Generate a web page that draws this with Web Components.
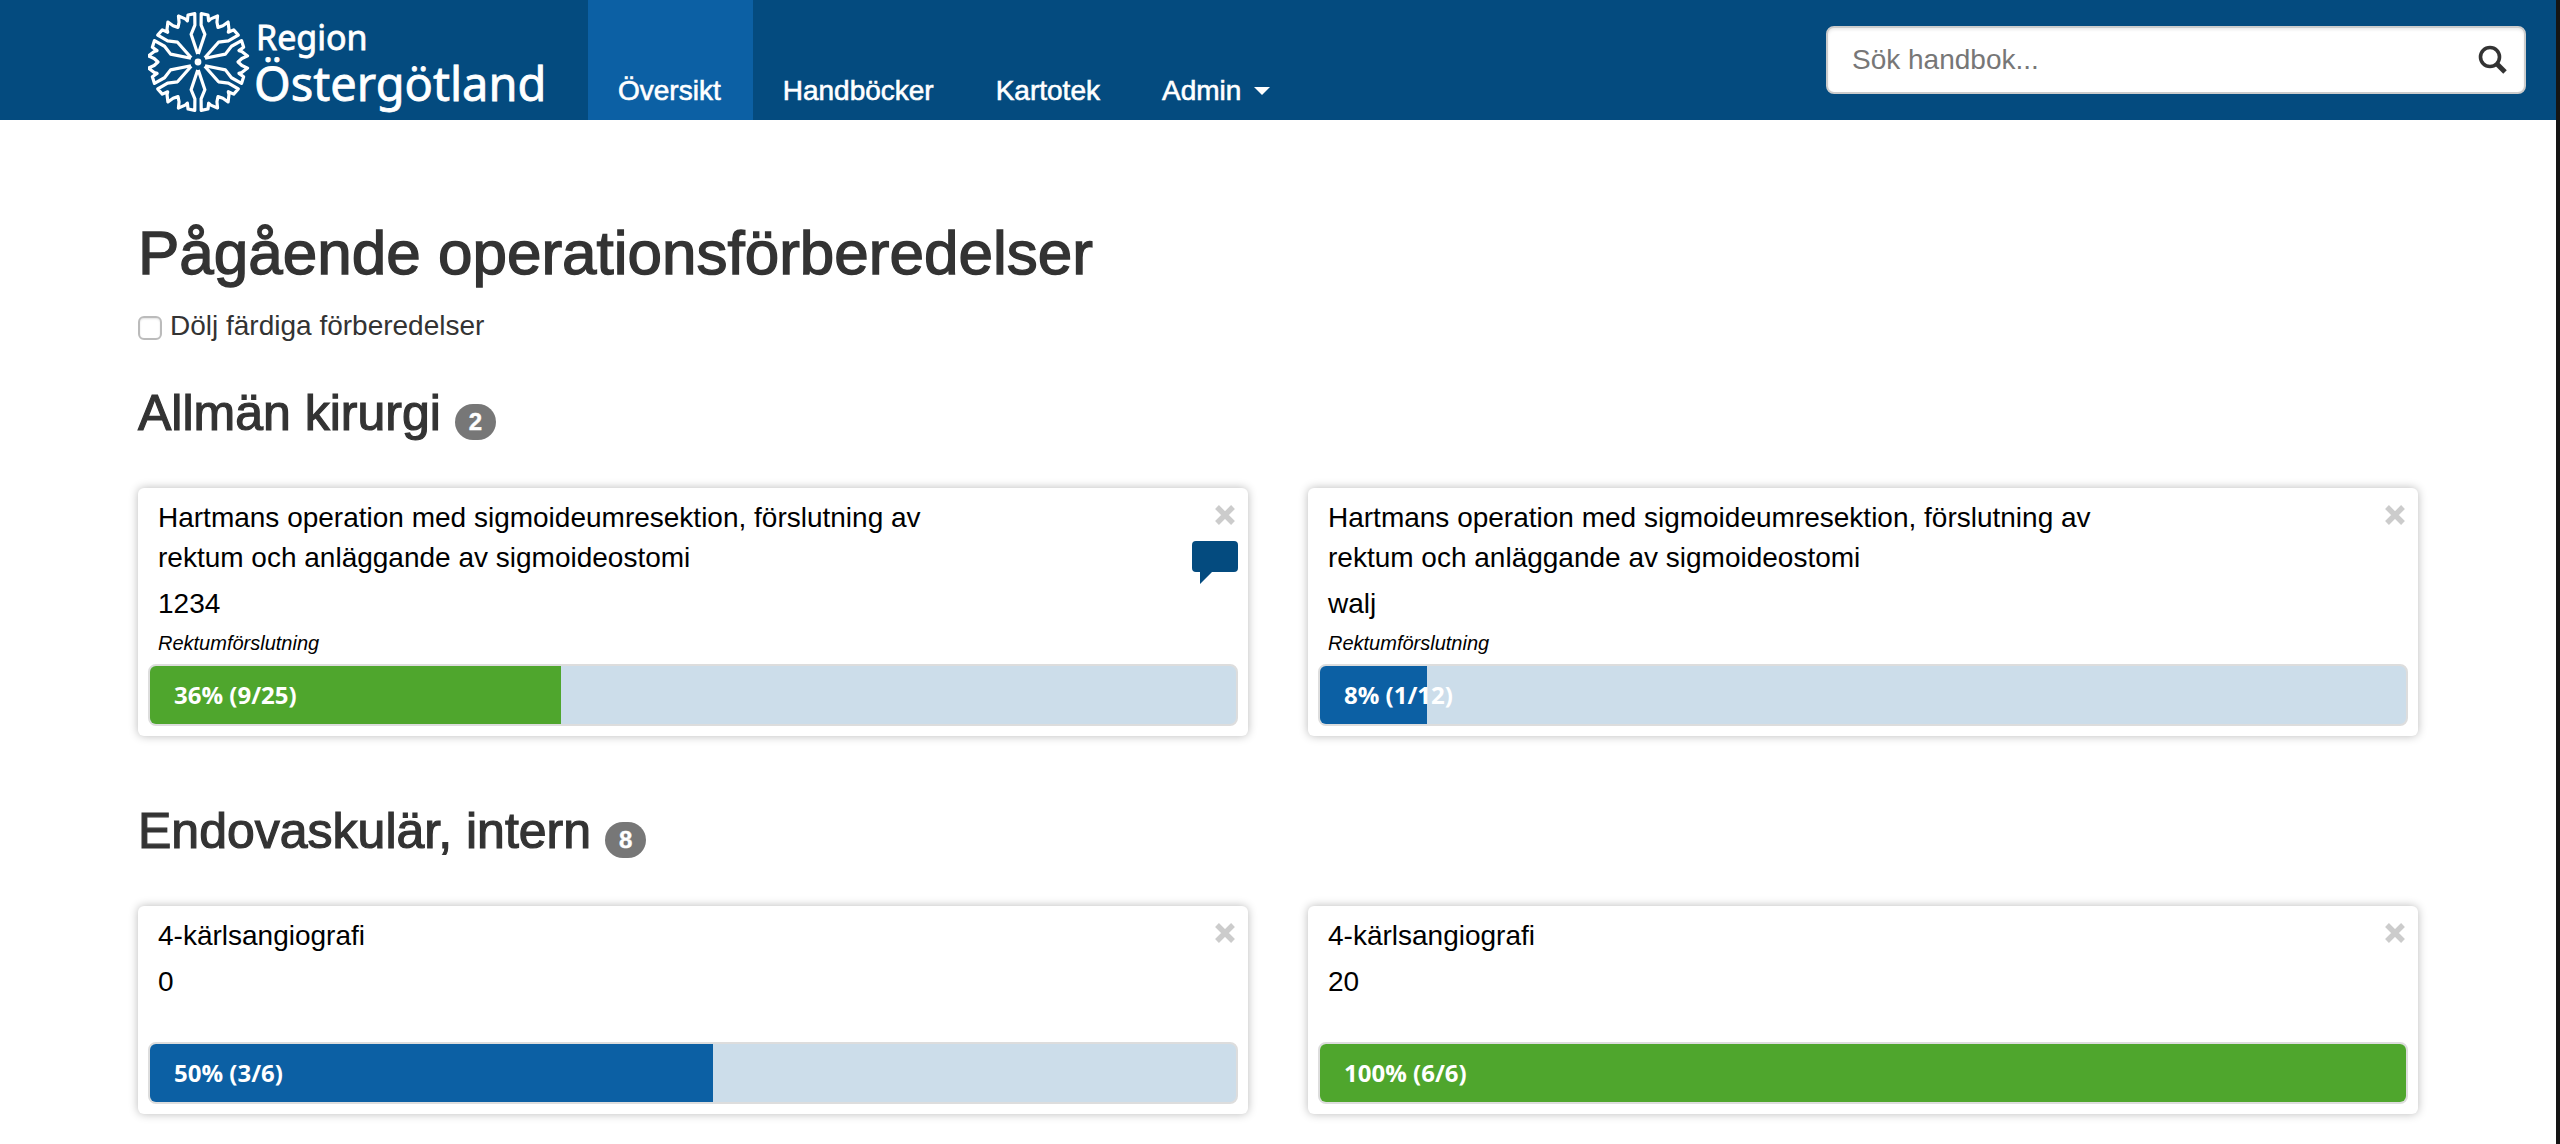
<!DOCTYPE html>
<html lang="sv">
<head>
<meta charset="utf-8">
<meta name="viewport" content="width=device-width, initial-scale=1">
<title>Pågående operationsförberedelser</title>
<style>
  html { background: #fff; }
  body {
    margin: 0;
    font: 28px/40px "Liberation Sans", Arial, sans-serif;
    color: #333;
    --navy: #044b7f;
    --blue: #0c60a4;
    --green: #4fa62d;
    --pale: #ccddea;
  }
</style>
</head>
<body>
<op-app>
  <op-header slot="header">
    <op-logo slot="brand"></op-logo>
    <op-nav-item active>Översikt</op-nav-item>
    <op-nav-item>Handböcker</op-nav-item>
    <op-nav-item>Kartotek</op-nav-item>
    <op-nav-item menu>Admin</op-nav-item>
    <op-search slot="search"></op-search>
  </op-header>
  <op-title>Pågående operationsförberedelser</op-title>
  <op-filter>Dölj färdiga förberedelser</op-filter>
  <op-section heading="Allmän kirurgi" count="2">
    <op-card patient="1234" note="Rektumförslutning" percent="36" steps="9/25" tone="green" comment>Hartmans operation med sigmoideumresektion, förslutning av rektum och anläggande av sigmoideostomi</op-card>
    <op-card patient="walj" note="Rektumförslutning" percent="8" steps="1/12" tone="blue">Hartmans operation med sigmoideumresektion, förslutning av rektum och anläggande av sigmoideostomi</op-card>
  </op-section>
  <op-section heading="Endovaskulär, intern" count="8">
    <op-card patient="0" percent="50" steps="3/6" tone="blue">4-kärlsangiografi</op-card>
    <op-card patient="20" percent="100" steps="6/6" tone="green">4-kärlsangiografi</op-card>
  </op-section>
</op-app>

<script>
class Base extends HTMLElement {
  connectedCallback() {
    if (this.shadowRoot) return;
    this.attachShadow({ mode: 'open' }).innerHTML =
      '<style>*{box-sizing:border-box}' + this.css() + '</style>' + this.html();
  }
}

customElements.define('op-app', class extends Base {
  css() { return `
    :host { display: block; min-height: 100vh; box-sizing: border-box; border-right: 4px solid #151515; }
    main { max-width: 2340px; margin: 0 auto; padding: 99px 30px 30px; }
  `; }
  html() { return '<slot name="header"></slot><main><slot></slot></main>'; }
});

customElements.define('op-header', class extends Base {
  css() { return `
    :host { display: block; }
    header { display: flex; align-items: stretch; justify-content: space-between; height: 120px; padding: 0 30px 0 148px; background: var(--navy); }
    .left { display: flex; gap: 40px; }
    nav { display: flex; }
    .find { display: flex; align-items: center; }
  `; }
  html() { return `<header><div class="left"><slot name="brand"></slot><nav aria-label="Huvudmeny"><slot></slot></nav></div><div class="find"><slot name="search"></slot></div></header>`; }
});

customElements.define('op-logo', class extends Base {
  css() { return `
    :host { display: block; width: 400px; }
    a { display: block; }
    svg { display: block; width: 400px; height: 120px; }
    text { fill: #fff; stroke: #fff; stroke-width: 0.8px; font-family: "Noto Sans", "Open Sans", sans-serif; }
  `; }
  html() {
    // Half of one petal's toothed rim: [degrees from the petal's axis, radius]
    const half = [[26.2, 48.5], [18, 48], [15.5, 42.5], [13.5, 45], [7, 50], [4.5, 44], [0, 40]];
    const rim = [...half.map(([a, r]) => [-a, r]), ...half.slice(0, -1).reverse()];
    const at = (deg, r) => {
      const t = deg * Math.PI / 180;
      return (r * Math.sin(t)).toFixed(2) + ' ' + (-r * Math.cos(t)).toFixed(2);
    };
    // Folded sides run from the rim in towards the hub
    const side = [[25.2, 37], [16, 28.5], [28, 8]];
    // The petal is open at the hub, so the outline starts and ends on its sides
    const pts = [...side.slice().reverse().map(([a, r]) => at(-a, r)), ...rim.map(([a, r]) => at(a, r)), ...side.map(([a, r]) => at(a, r))];
    const petal = 'M' + pts.join('L');
    const petals = [30, 90, 150, 210, 270, 330].map(d => `<path d="${petal}" transform="rotate(${d})"/>`).join('');
    return `<a href="#"><svg viewBox="0 0 400 120">
      <g transform="translate(50 62)" fill="none" stroke="#fff" stroke-width="3.2" stroke-linejoin="round">${petals}<circle r="3.4" fill="#fff" stroke="none"/></g>
      <text x="108" y="50" font-size="34">Region</text>
      <text x="106" y="101" font-size="47">Östergötland</text>
    </svg></a>`;
  }
});

customElements.define('op-nav-item', class extends Base {
  css() { return `
    :host { display: block; }
    a { display: flex; align-items: center; gap: 13px; height: 120px; padding: 62px 32px 0 30px; color: #fff; text-decoration: none; -webkit-text-stroke: 0.6px #fff; }
    :host([active]) a { background: var(--blue); }
    i { border: 8px solid transparent; border-top-color: #fff; border-bottom: 0; }
  `; }
  html() { return `<a href="#"><slot></slot>${this.hasAttribute('menu') ? '<i></i>' : ''}</a>`; }
});

customElements.define('op-search', class extends Base {
  css() { return `
    :host { display: block; }
    form { display: flex; align-items: center; width: 700px; height: 68px; margin: 0; padding-right: 16px; background: #fff; border: 2px solid #ccc; border-radius: 8px; box-shadow: inset 0 2px 3px rgba(0,0,0,.08); }
    input { flex: 1; min-width: 0; height: 60px; padding: 0 24px; border: 0; outline: 0; background: none; font: inherit; color: #333; }
    input::placeholder { color: #777; opacity: 1; }
    button { display: block; padding: 0; border: 0; background: none; }
    svg { display: block; width: 30px; height: 30px; }
  `; }
  html() { return `<form role="search" onsubmit="return false"><input type="text" aria-label="Sök handbok" placeholder="Sök handbok..."><button type="submit" aria-label="Sök"><svg viewBox="0 0 30 30" fill="none" stroke="#333"><circle cx="12" cy="12" r="9.5" stroke-width="3.6"/><path d="M19 19L27 27" stroke-width="5"/></svg></button></form>`; }
});

customElements.define('op-title', class extends Base {
  css() { return `
    :host { display: block; }
    h1 { margin: 0 0 19px; font-size: 62px; line-height: 68px; font-weight: 500; -webkit-text-stroke: 1.4px #333; }
  `; }
  html() { return '<h1><slot></slot></h1>'; }
});

customElements.define('op-filter', class extends Base {
  css() { return `
    :host { display: block; }
    label { display: flex; align-items: center; gap: 8px; width: fit-content; }
    input { appearance: none; width: 24px; height: 24px; margin: 4px 0 0; background: #fff; border: 2px solid #bbb; border-radius: 6px; box-shadow: inset 0 1px 2px rgba(0,0,0,.12); }
  `; }
  html() { return '<label for="hide"><input type="checkbox" id="hide"><span><slot></slot></span></label>'; }
});

customElements.define('op-section', class extends Base {
  css() { return `
    :host { display: block; margin-top: 40px; }
    :host(:not(:last-child)) { margin-bottom: 68px; }
    h2 { display: flex; align-items: baseline; gap: 14px; margin: 0 0 47px; font-size: 50px; line-height: 55px; font-weight: 500; -webkit-text-stroke: 1.2px #333; }
    .badge { padding: 6px 14px; border-radius: 18px; background: #777; color: #fff; font-size: 24px; line-height: 24px; font-weight: 700; -webkit-text-stroke: 0.4px #fff; }
    .grid { display: grid; grid-template-columns: 1fr 1fr; gap: 60px; }
  `; }
  html() { return `<section><h2><span>${this.getAttribute('heading')}</span><span class="badge">${this.getAttribute('count')}</span></h2><div class="grid"><slot></slot></div></section>`; }
});

customElements.define('op-card', class extends Base {
  css() { return `
    :host { display: block; }
    article { padding: 10px; border-radius: 6px; background: #fff; color: #000; box-shadow: 0 0 10px rgba(0,0,0,.28); }
    .top { display: flex; justify-content: space-between; padding-left: 10px; }
    .info { width: 78%; }
    p { margin: 0; }
    .patient { margin-top: 6px; }
    .note { height: 40px; padding-top: 4px; font-size: 20px; line-height: 30px; font-style: italic; }
    .tools { display: flex; flex-direction: column; align-items: flex-end; gap: 16px; }
    button { display: block; padding: 0; border: 0; background: none; }
    svg { display: block; }
    .close { margin: 7px 3px 0 0; }
    .close svg { width: 20px; height: 20px; }
    .bar { height: 62px; border: 2px solid #ddd; border-radius: 8px; background: var(--pale); overflow: hidden; }
    .fill { width: calc(var(--done) + 20px); max-width: 100%; height: 58px; padding-left: 24px; background: var(--blue); color: #fff; font: 700 24px/58px "Open Sans", "Noto Sans", sans-serif; white-space: nowrap; }
    .green { background: var(--green); }
  `; }
  html() {
    const g = n => this.getAttribute(n) || '';
    const comment = this.hasAttribute('comment')
      ? '<button type="button" aria-label="Kommentar"><svg width="46" height="44" viewBox="0 0 46 44"><path fill="#044b7f" d="M4 0H42Q46 0 46 4V27Q46 31 42 31H20L8 43V31H4Q0 31 0 27V4Q0 0 4 0Z"/></svg></button>' : '';
    return `<article>
      <div class="top">
        <div class="info"><p><slot></slot></p><p class="patient">${g('patient')}</p><p class="note">${g('note')}</p></div>
        <div class="tools"><button type="button" class="close" aria-label="Stäng"><svg viewBox="0 0 20 20"><path d="M2 2L18 18M18 2L2 18" stroke="#ccc" stroke-width="5.4"/></svg></button>${comment}</div>
      </div>
      <div class="bar" role="progressbar" aria-label="Framsteg" aria-valuemin="0" aria-valuemax="100" aria-valuenow="${g('percent')}"><div class="fill ${g('tone')}" style="--done:${g('percent')}%">${g('percent')}% (${g('steps')})</div></div>
    </article>`;
  }
});
</script>
</body>
</html>
